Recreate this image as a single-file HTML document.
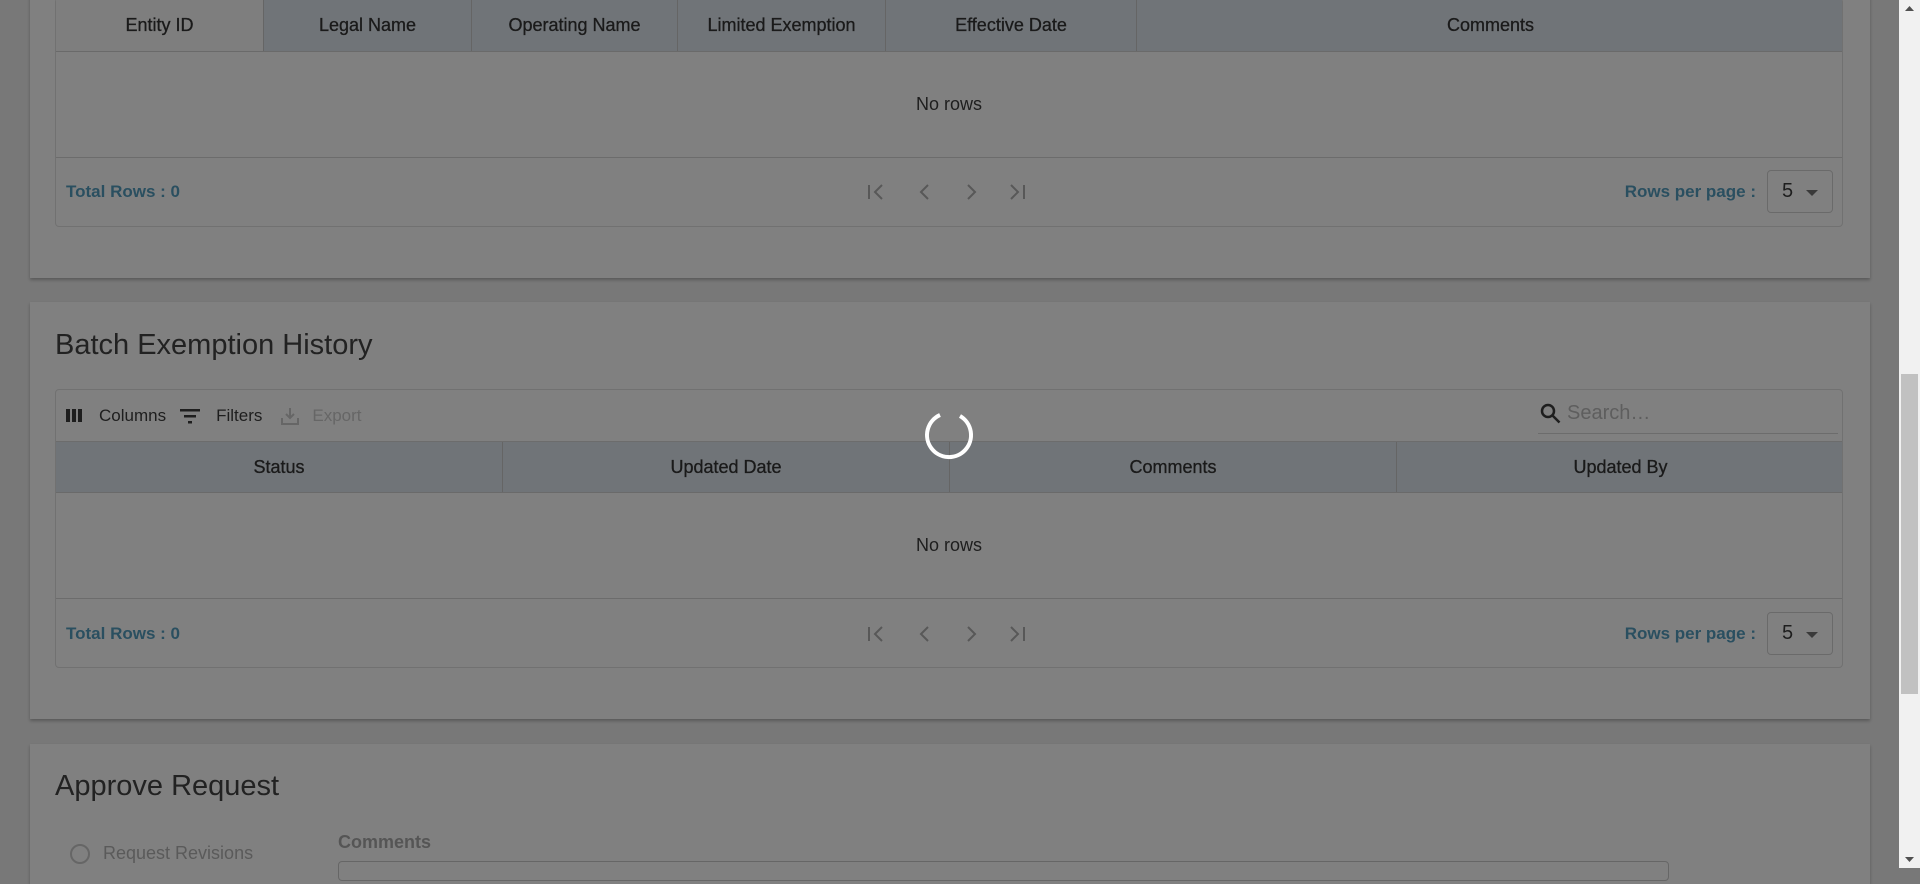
<!DOCTYPE html>
<html><head><meta charset="utf-8"><style>
*{box-sizing:border-box;margin:0;padding:0}
body{width:1920px;height:868px;overflow:hidden;background:#787878;font-family:"Liberation Sans",sans-serif;color:#1f1f1f;position:relative}
.abs{position:absolute}
.card{position:absolute;left:30px;width:1840px;background:#808080;box-shadow:0 2px 3px rgba(0,0,0,.25)}
.tbl{position:absolute;left:55px;width:1788px;border:1px solid #717171;border-radius:4px}
.hd{position:absolute;left:0;right:0;background:#707478;border-bottom:1px solid #6a6a6a}
.hc{position:absolute;top:0;height:100%;display:flex;align-items:center;justify-content:center;font-size:18px;border-right:1px solid #656565;color:#1a1a1a;-webkit-text-stroke:0.3px #1a1a1a}
.norows{position:absolute;left:0;right:0;text-align:center;font-size:18px;color:#1e1e1e}
.ft{position:absolute;left:0;right:0;border-top:1px solid #6c6c6c}
.tr{position:absolute;left:10px;font-size:17px;font-weight:bold;color:#2a4f60}
.rpp{position:absolute;right:86px;font-size:17px;font-weight:bold;color:#2a4f60}
.sel{position:absolute;right:9px;width:66px;height:43px;border:1px solid #6a6a6a;border-radius:4px;font-size:20px;padding:9px 0 0 14px;color:#1e1e1e}
.sel:after{content:"";position:absolute;right:14px;top:19px;border:6px solid transparent;border-top:6px solid #3a3a3a}
h2{position:absolute;left:55px;font-weight:normal;font-size:29px;color:#222}
</style></head><body>

<div class="card" style="top:-10px;height:288px"></div>
<div class="tbl" style="top:-2px;height:229px">
 <div class="hd" style="top:0;height:53px">
  <div class="hc" style="left:0;width:208px;background:#7e7e7e">Entity ID</div>
  <div class="hc" style="left:208px;width:208px">Legal Name</div>
  <div class="hc" style="left:416px;width:206px">Operating Name</div>
  <div class="hc" style="left:622px;width:208px">Limited Exemption</div>
  <div class="hc" style="left:830px;width:251px">Effective Date</div>
  <div class="hc" style="left:1081px;width:707px;border-right:none">Comments</div>
 </div>
 <div class="norows" style="top:95px">No rows</div>
 <div class="ft" style="top:158px;height:70px">
  <div class="tr" style="top:24px">Total Rows : 0</div>
  <svg class="abs" style="left:810px;top:22px" width="220" height="24" viewBox="0 0 220 24" fill="none" stroke="#585858" stroke-width="2">
   <path d="M3 5v14M16 5l-7 7 7 7"/><path d="M62 5l-7 7 7 7"/><path d="M102 5l7 7-7 7"/><path d="M145 5l7 7-7 7M158 5v14"/>
  </svg>
  <div class="rpp" style="top:24px">Rows per page :</div>
  <div class="sel" style="top:12px">5</div>
 </div>
</div>

<div class="card" style="top:302px;height:417px"></div>
<h2 style="top:329px">Batch Exemption History</h2>
<div class="tbl" style="top:389px;height:279px">
 <div class="abs" style="left:10px;top:16px;font-size:17px;color:#1e1e1e;display:flex;align-items:center">
  <svg width="20" height="14" viewBox="0 0 20 14"><rect x="0" y="0" width="4" height="13" fill="#1e1e1e"/><rect x="6" y="0" width="4" height="13" fill="#1e1e1e"/><rect x="12" y="0" width="4" height="13" fill="#1e1e1e"/></svg>
  <span style="margin-left:13px">Columns</span>
  <svg style="margin-left:14px" width="22" height="16" viewBox="0 0 22 16" fill="#1e1e1e"><rect x="0" y="1" width="20" height="2.5"/><rect x="4" y="7" width="12" height="2.5"/><rect x="8" y="13" width="4" height="2.5"/></svg>
  <span style="margin-left:14px">Filters</span>
  <svg style="margin-left:18px" width="20" height="20" viewBox="0 0 20 20" fill="none" stroke="#666" stroke-width="2"><path d="M10 2v10M6 8l4 4 4-4M2 12v6h16v-6"/></svg>
  <span style="margin-left:12px;color:#666">Export</span>
 </div>
 <svg class="abs" style="left:1484px;top:13px" width="22" height="22" viewBox="0 0 22 22" fill="none" stroke="#1e1e1e" stroke-width="2.5"><circle cx="8" cy="8" r="6"/><path d="M12.5 12.5l7 7"/></svg>
 <div class="abs" style="left:1511px;top:12px;font-size:20px;color:#5e5e5e">Search…</div>
 <div class="abs" style="left:1482px;top:43px;width:300px;border-top:1px solid #6c6c6c"></div>
 <div class="hd" style="top:51px;height:52px;border-top:1px solid #6c6c6c">
  <div class="hc" style="left:0;width:447px">Status</div>
  <div class="hc" style="left:447px;width:447px">Updated Date</div>
  <div class="hc" style="left:894px;width:447px">Comments</div>
  <div class="hc" style="left:1341px;width:447px;border-right:none">Updated By</div>
 </div>
 <div class="norows" style="top:145px">No rows</div>
 <div class="ft" style="top:208px;height:70px">
  <div class="tr" style="top:25px">Total Rows : 0</div>
  <svg class="abs" style="left:810px;top:23px" width="220" height="24" viewBox="0 0 220 24" fill="none" stroke="#585858" stroke-width="2">
   <path d="M3 5v14M16 5l-7 7 7 7"/><path d="M62 5l-7 7 7 7"/><path d="M102 5l7 7-7 7"/><path d="M145 5l7 7-7 7M158 5v14"/>
  </svg>
  <div class="rpp" style="top:25px">Rows per page :</div>
  <div class="sel" style="top:13px">5</div>
 </div>
</div>

<div class="card" style="top:744px;height:140px"></div>
<h2 style="top:770px">Approve Request</h2>
<div class="abs" style="left:70px;top:844px;width:20px;height:20px;border:2px solid #666;border-radius:50%"></div>
<div class="abs" style="left:103px;top:843px;font-size:18px;color:#5a5a5a">Request Revisions</div>
<div class="abs" style="left:338px;top:832px;font-size:18px;font-weight:bold;color:#555">Comments</div>
<div class="abs" style="left:338px;top:861px;width:1331px;height:20px;border:1px solid #666;border-radius:4px"></div>

<svg class="abs" style="left:924px;top:408px" width="52" height="52" viewBox="0 0 52 52" fill="none"><path d="M36 8 A22 22 0 1 1 16 7" stroke="#fff" stroke-width="4"/></svg>

<div class="abs" style="left:1899px;top:0;width:21px;height:868px;background:#f1f1f1"></div>
<div class="abs" style="left:1901px;top:374px;width:17px;height:320px;background:#c1c1c1"></div>
<svg class="abs" style="left:1904px;top:4px" width="11" height="8"><path d="M1 7l4.5-5 4.5 5z" fill="#505050"/></svg>
<svg class="abs" style="left:1904px;top:856px" width="11" height="8"><path d="M1 1l4.5 5 4.5-5z" fill="#505050"/></svg>
</body></html>
